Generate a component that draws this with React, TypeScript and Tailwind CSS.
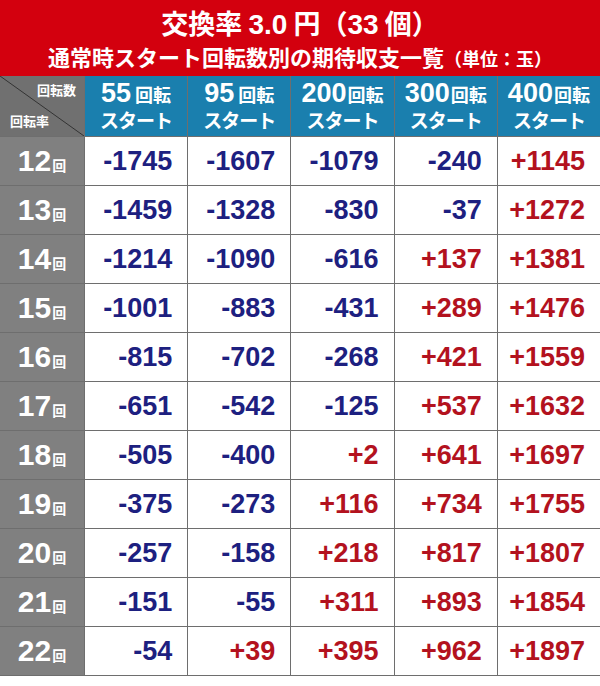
import React from "react";

const cols = ["55", "95", "200", "300", "400"];
const rows: [string, string[]][] = [
  ["12", ["-1745", "-1607", "-1079", "-240", "+1145"]],
  ["13", ["-1459", "-1328", "-830", "-37", "+1272"]],
  ["14", ["-1214", "-1090", "-616", "+137", "+1381"]],
  ["15", ["-1001", "-883", "-431", "+289", "+1476"]],
  ["16", ["-815", "-702", "-268", "+421", "+1559"]],
  ["17", ["-651", "-542", "-125", "+537", "+1632"]],
  ["18", ["-505", "-400", "+2", "+641", "+1697"]],
  ["19", ["-375", "-273", "+116", "+734", "+1755"]],
  ["20", ["-257", "-158", "+218", "+817", "+1807"]],
  ["21", ["-151", "-55", "+311", "+893", "+1854"]],
  ["22", ["-54", "+39", "+395", "+962", "+1897"]],
];

const jp = { fontFamily: '"Noto Sans CJK JP", "Noto Sans", sans-serif' };
const num = { fontFamily: '"Liberation Sans", Arial, "Noto Sans CJK JP", sans-serif' };

export default function App() {
  return (
    <div className="w-[600px] h-[686px] bg-white">
      <div className="h-[76px] bg-[#d3000e] flex flex-col items-center text-white font-bold" style={jp}>
        <div className="mt-[5px] text-[27px] leading-[36px]">
          交換率 <span style={num} className="text-[28px]">3.0</span> 円（<span style={num} className="text-[28px]">33</span> 個）
        </div>
        <div className="text-[22px] leading-[30px] -mt-[2px]">
          通常時スタート回転数別の期待収支一覧<span className="text-[18px]">（単位：玉）</span>
        </div>
      </div>
      <div className="grid grid-cols-[84px_repeat(5,minmax(0,1fr))] gap-px bg-[#6e6e6e] border-b border-[#6e6e6e]">
        <div className="relative h-[60px] bg-[#707070] text-white font-bold text-[13px] leading-none" style={jp}>
          <svg className="absolute inset-0" width="84" height="60" viewBox="0 0 84 60">
            <line x1="0" y1="0" x2="84" y2="60" stroke="#333" strokeWidth="1" />
          </svg>
          <div className="absolute right-[8px] top-[7px]">回転数</div>
          <div className="absolute left-[10px] bottom-[9px]">回転率</div>
        </div>
        {cols.map((c) => (
          <div key={c} className="h-[60px] bg-[#1a7fae] text-white font-bold flex flex-col items-center justify-center" style={jp}>
            <div className="flex items-baseline leading-[27px]">
              <span style={num} className={c.length === 2 ? "text-[27px] mr-[4px]" : "text-[27px] mr-[1px]"}>{c}</span>
              <span className="text-[18px]">回転</span>
            </div>
            <div className="text-[19px] leading-[24px] tracking-[-1px]">スタート</div>
          </div>
        ))}
        {rows.map(([r, vals]) => (
          <React.Fragment key={r}>
            <div className="h-[48px] bg-[#808080] text-white font-bold flex items-center justify-center">
              <span style={num} className="text-[30px] leading-none">{r}</span>
              <span style={jp} className="text-[14px] leading-none ml-[1px] mt-[8px]">回</span>
            </div>
            {vals.map((v, i) => (
              <div
                key={i}
                style={num}
                className={
                  "h-[48px] bg-white flex items-center justify-end pr-[15px] font-bold text-[27px] leading-none " +
                  (v.startsWith("+") ? "text-[#b3121e]" : "text-[#1d2080]")
                }
              >
                {v}
              </div>
            ))}
          </React.Fragment>
        ))}
      </div>
    </div>
  );
}
